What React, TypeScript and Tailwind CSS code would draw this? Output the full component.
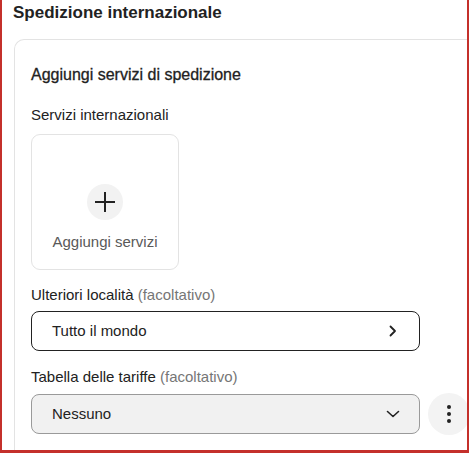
import React from 'react';

const font = { fontFamily: '"Liberation Sans", Arial, sans-serif' };

function PlusIcon() {
  return (
    <svg width="22" height="22" viewBox="0 0 22 22" fill="none" stroke="#222222" strokeWidth="2">
      <path d="M11 1v20M1 11h20" />
    </svg>
  );
}

function ChevronRight() {
  return (
    <svg width="10" height="12" viewBox="0 0 10 12" fill="none" stroke="#222222" strokeWidth="1.8" strokeLinecap="round" strokeLinejoin="round">
      <path d="M2.5 1.5 7 6l-4.5 4.5" />
    </svg>
  );
}

function ChevronDown() {
  return (
    <svg width="14" height="10" viewBox="0 0 14 10" fill="none" stroke="#222222" strokeWidth="1.6" strokeLinecap="round" strokeLinejoin="round">
      <path d="M1.5 2.5 7 7.5l5.5-5" />
    </svg>
  );
}

export default function App() {
  return (
    <div
      className="w-[469px] h-[453px] overflow-hidden bg-white border-l-2 border-r-2 border-b-[3px] border-[#c4302b] text-[#222222]"
      style={font}
    >
      <div className="pl-[11px]">
        <h1 className="mt-[1px] text-[17px] leading-[24px] font-bold">Spedizione internazionale</h1>
      </div>

      <div className="mt-[14px] ml-[12px] h-[420px] border-l border-t border-[#e3e3e3] rounded-tl-[10px] pl-[16px] pt-[23px]">
        <h2 className="text-[16px] leading-[24px]" style={{ WebkitTextStroke: '0.3px #222222' }}>
          Aggiungi servizi di spedizione
        </h2>

        <p className="mt-[17px] text-[15px] leading-[22px]">Servizi internazionali</p>

        <div className="mt-[8px] w-[148px] h-[136px] border border-[#e3e3e3] rounded-[9px] flex flex-col items-center pt-[49px]">
          <div className="w-[36px] h-[36px] rounded-full bg-[#f2f2f2] flex items-center justify-center">
            <PlusIcon />
          </div>
          <span className="mt-[11px] text-[15px] leading-[22px] text-[#595959]">Aggiungi servizi</span>
        </div>

        <p className="mt-[14px] text-[15px] leading-[22px]">
          Ulteriori località <span className="text-[#767676]">(facoltativo)</span>
        </p>

        <div className="mt-[5px] w-[389px] h-[40px] border border-[#222222] rounded-[8px] flex items-center justify-between pl-[20px] pr-[21px]">
          <span className="text-[15px]">Tutto il mondo</span>
          <ChevronRight />
        </div>

        <p className="mt-[15px] text-[15px] leading-[22px]">
          Tabella delle tariffe <span className="text-[#767676]">(facoltativo)</span>
        </p>

        <div className="mt-[5px] flex items-center gap-[8px]">
          <div className="shrink-0 w-[389px] h-[40px] border border-[#9a9a9a] bg-[#f1f1f1] rounded-[8px] flex items-center justify-between pl-[20px] pr-[19px]">
            <span className="text-[15px]">Nessuno</span>
            <ChevronDown />
          </div>
          <div className="shrink-0 w-[42px] h-[42px] rounded-full bg-[#f3f3f3] flex flex-col items-center justify-center gap-[3px]">
            <span className="w-[4px] h-[4px] rounded-full bg-[#222222]" />
            <span className="w-[4px] h-[4px] rounded-full bg-[#222222]" />
            <span className="w-[4px] h-[4px] rounded-full bg-[#222222]" />
          </div>
        </div>
      </div>
    </div>
  );
}
